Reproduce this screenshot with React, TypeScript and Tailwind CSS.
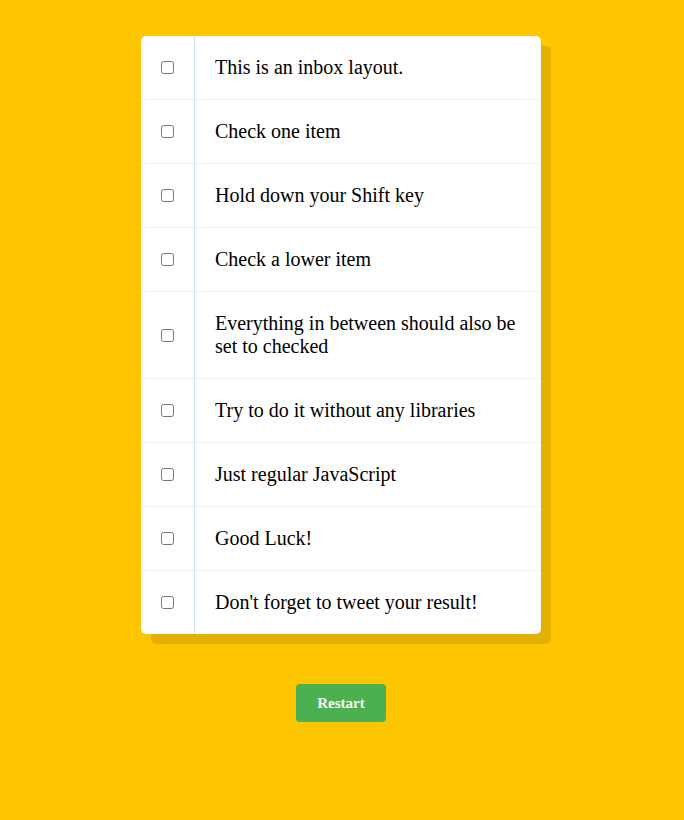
import React from "react";

const items = [
  "This is an inbox layout.",
  "Check one item",
  "Hold down your Shift key",
  "Check a lower item",
  "Everything in between should also be set to checked",
  "Try to do it without any libraries",
  "Just regular JavaScript",
  "Good Luck!",
  "Don't forget to tweet your result!",
];

export default function App() {
  return (
    <div className="min-h-screen w-full bg-[#ffc600] pt-[36px] pr-[2px] font-['Liberation_Serif',serif]">
      <div className="mx-auto w-[400px] rounded-[5px] bg-white shadow-[10px_10px_0_rgba(0,0,0,0.1)]">
        {items.map((t, i) => (
          <div
            key={i}
            className={`flex items-center ${i < items.length - 1 ? "border-b border-[#f1f1f1]" : ""}`}
          >
            <input type="checkbox" className="m-5 h-[13px] w-[13px] shrink-0" />
            <p className="m-0 flex-1 self-stretch border-l border-[#d1e2ff] p-5 text-[20px] leading-[23px] text-black">
              {t}
            </p>
          </div>
        ))}
      </div>
      <div className="mt-[50px] flex justify-center">
        <button className="flex h-[38px] w-[90px] items-center justify-center rounded-[4px] bg-[#4caf50] text-[15px] font-bold text-white">
          Restart
        </button>
      </div>
    </div>
  );
}
